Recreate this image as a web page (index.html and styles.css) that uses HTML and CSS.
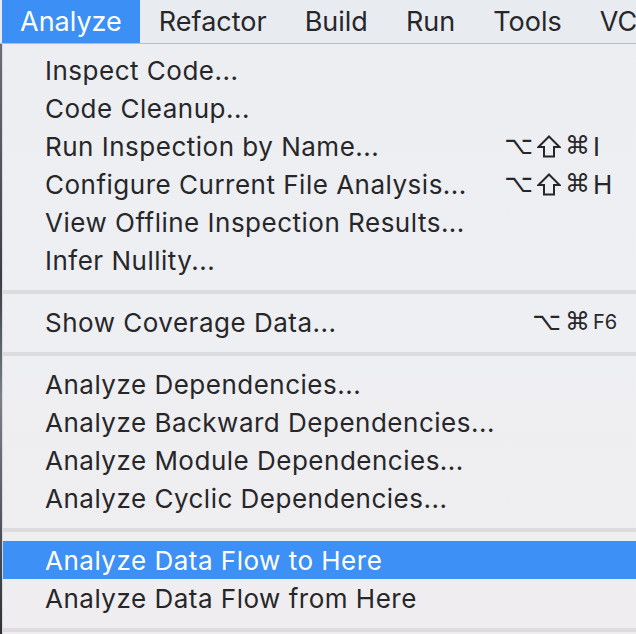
FILE: index.html
```html
<!DOCTYPE html>
<html>
<head>
<meta charset="utf-8">
<link rel="stylesheet" href="styles.css">
</head>
<body>
<div class="screen">
  <div class="menubar">
    <div class="bar-item active">Analyze</div>
    <div class="bar-item">Refactor</div>
    <div class="bar-item">Build</div>
    <div class="bar-item">Run</div>
    <div class="bar-item">Tools</div>
    <div class="bar-item">VCS</div>
  </div>
  <div class="body">
    <div class="desk"></div>
    <div class="menu">
      <div class="item"><span class="label">Inspect Code...</span></div>
      <div class="item"><span class="label">Code Cleanup...</span></div>
      <div class="item"><span class="label">Run Inspection by Name...</span>
        <span class="sc"><span class="mods"><span class="m">⌥</span><svg class="shift" viewBox="0 0 24 24" width="24" height="24"><path d="M12 1.5 L22.5 12 L17 12 L17 21.5 L7 21.5 L7 12 L1.5 12 Z" fill="none" stroke="currentColor" stroke-width="2" stroke-linejoin="miter"/></svg><span class="m">⌘</span></span><span class="key">I</span></span></div>
      <div class="item"><span class="label">Configure Current File Analysis...</span>
        <span class="sc"><span class="mods"><span class="m">⌥</span><svg class="shift" viewBox="0 0 24 24" width="24" height="24"><path d="M12 1.5 L22.5 12 L17 12 L17 21.5 L7 21.5 L7 12 L1.5 12 Z" fill="none" stroke="currentColor" stroke-width="2" stroke-linejoin="miter"/></svg><span class="m">⌘</span></span><span class="key">H</span></span></div>
      <div class="item"><span class="label">View Offline Inspection Results...</span></div>
      <div class="item"><span class="label">Infer Nullity...</span></div>
      <div class="sep"></div>
      <div class="item"><span class="label">Show Coverage Data...</span>
        <span class="sc"><span class="mods"><span class="m">⌥</span><span class="m">⌘</span></span><span class="key small">F6</span></span></div>
      <div class="sep"></div>
      <div class="item"><span class="label">Analyze Dependencies...</span></div>
      <div class="item"><span class="label">Analyze Backward Dependencies...</span></div>
      <div class="item"><span class="label">Analyze Module Dependencies...</span></div>
      <div class="item"><span class="label">Analyze Cyclic Dependencies...</span></div>
      <div class="sep"></div>
      <div class="item selected"><span class="label">Analyze Data Flow to Here</span></div>
      <div class="item"><span class="label">Analyze Data Flow from Here</span></div>
      <div class="sep"></div>
    </div>
  </div>
</div>
</body>
</html>
```
FILE: styles.css
```css
html, body {
  margin: 0;
  padding: 0;
}
body {
  width: 636px;
  height: 634px;
  overflow: hidden;
  font-family: Inter, "Liberation Sans", sans-serif;
  color: #272729;
}
.screen {
  width: 636px;
  height: 634px;
  display: flex;
  flex-direction: column;
  overflow: hidden;
}
.menubar {
  height: 43px;
  flex: none;
  display: flex;
  padding-left: 2px;
  background: #e8ebf0;
  border-bottom: 1px solid #b9bcc1;
  white-space: nowrap;
}
.bar-item {
  padding: 0 19px;
  font-size: 27px;
  line-height: 43px;
  color: #27272a;
}
.bar-item.active {
  padding: 0 18px;
  background: #3b8ff5;
  color: #ffffff;
}
.body {
  flex: 1;
  display: flex;
  min-height: 0;
}
.desk {
  width: 2px;
  flex: none;
  background: linear-gradient(#6b6e76, #3a3d45 40%, #7a7f88 60%, #2e3038);
}
.menu {
  flex: 1;
  padding-top: 7px;
  background: linear-gradient(180deg, #eceef1 0%, #eeeff2 50%, #efedf0 100%);
  border-left: 1px solid #d8d9dc;
}
.item {
  height: 38px;
  display: flex;
  align-items: center;
  padding-left: 42px;
  font-size: 26px;
  letter-spacing: 0.5px;
  white-space: nowrap;
}
.item.selected {
  background: #3d90f6;
  color: #ffffff;
}
.sc {
  margin-left: auto;
  display: flex;
  align-items: center;
  letter-spacing: 0;
}
.mods {
  display: flex;
  align-items: center;
  gap: 4px;
  margin-right: 3px;
}
.m {
  font-family: "DejaVu Sans", sans-serif;
  font-size: 25px;
  line-height: 30px;
}
.shift {
  display: block;
  flex: none;
  margin-top: 1px;
}
.key {
  width: 43px;
  font-size: 26px;
}
.key.small {
  font-size: 20px;
}
.sep {
  height: 4px;
  margin: 11px 0 9px;
  background: #dcdcdf;
}
```
